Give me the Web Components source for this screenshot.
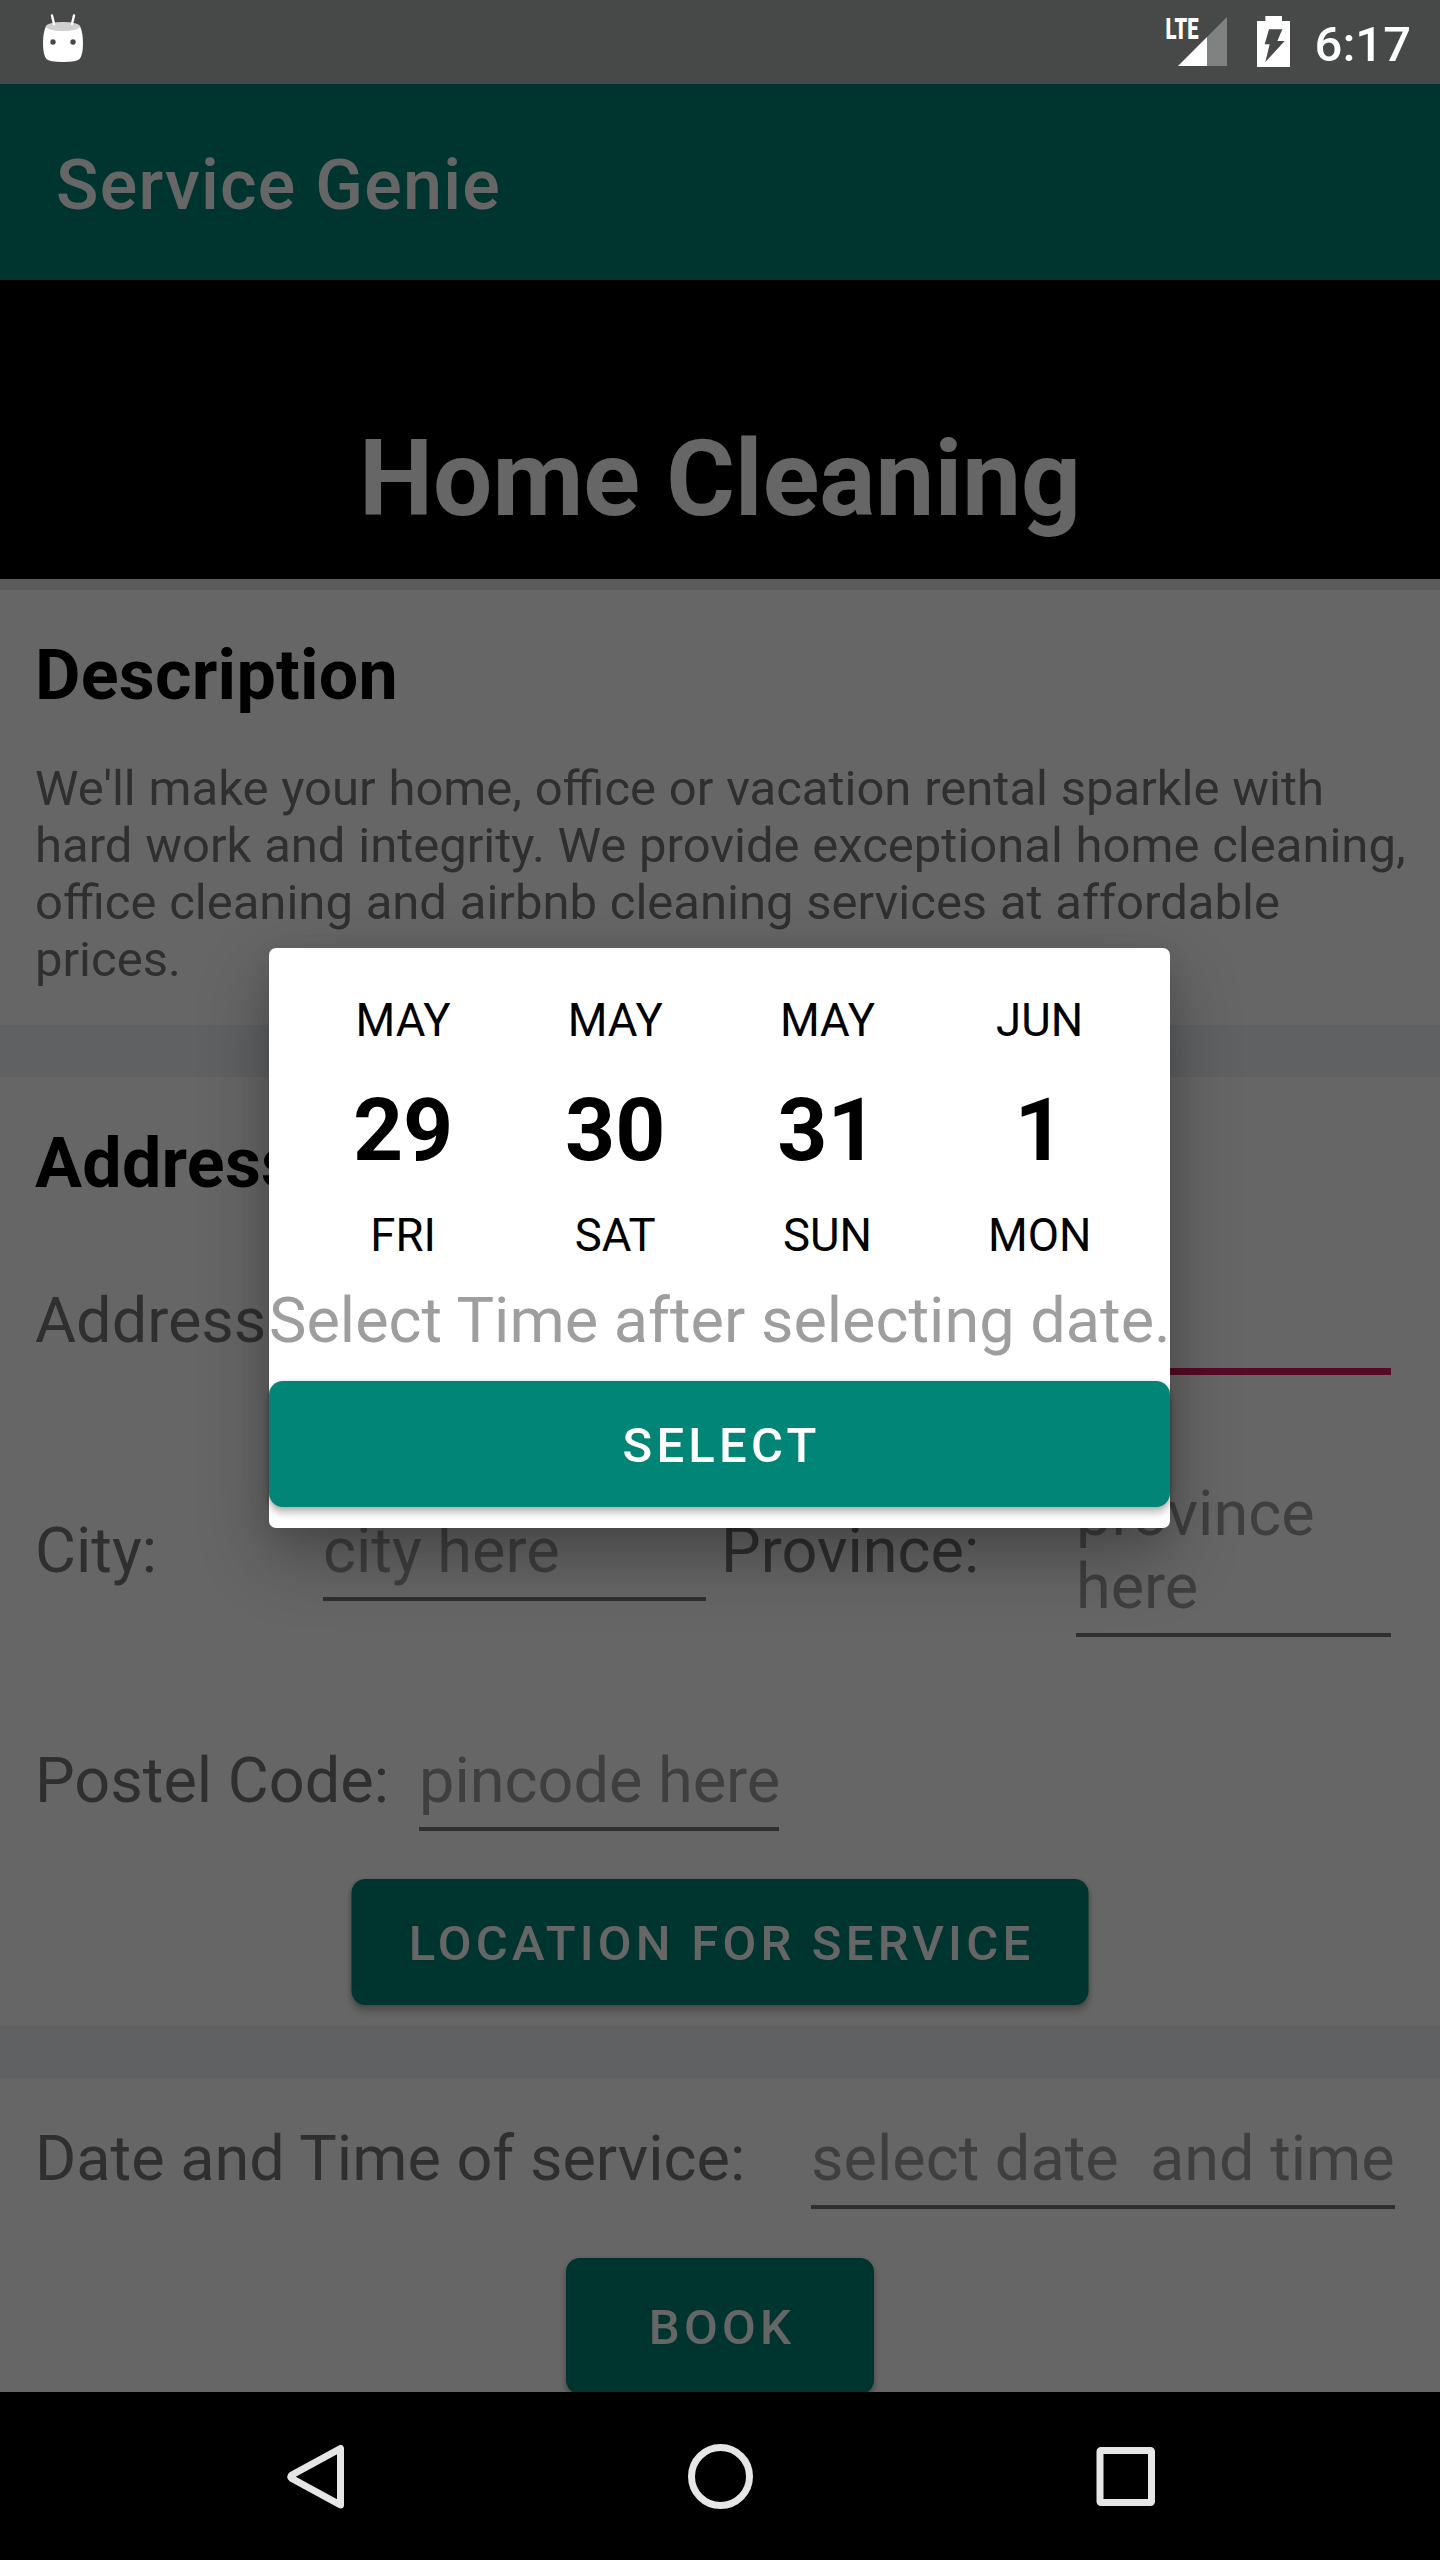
<!DOCTYPE html>
<html lang="en">
<head>
<meta charset="utf-8">
<title>Service Genie</title>
<style>
html,body{margin:0;padding:0;background:#000}
body{width:1440px;height:2560px;overflow:hidden;font-family:Roboto,"Noto Sans",sans-serif}
</style>
</head>
<body>
<service-app></service-app>
<script>
function define(name, html) {
  const t = document.createElement('template');
  t.innerHTML = html.trim();
  customElements.define(name, class extends HTMLElement {
    constructor() {
      super();
      this.attachShadow({mode: 'open'}).appendChild(t.content.cloneNode(true));
    }
  });
}

define('status-bar', `
<style>
:host{display:flex;align-items:flex-start;height:84px;background:#474948;color:#fff;box-sizing:border-box;padding-left:43px;padding-right:29px}
svg{display:block;flex:none;overflow:visible}
.robot{margin-top:14px}
.signal{margin:15px 30px 0 auto}
.battery{margin:16px 25px 0 0}
.time{font-size:49px;line-height:58px;margin-top:16px;font-weight:500;letter-spacing:0}
</style>
<svg class="robot" width="40" height="49" viewBox="0 0 40 49">
<path d="M3 12Q20 5 37 12Q40 19 40 29Q40 41 36.500 45Q34 48 20 48Q6 48 3.500 45Q0 41 0 29Q0 19 3 12Z" fill="#fff"/>
<ellipse cx="20" cy="12.500" rx="17" ry="4.500" fill="#d0d0d0"/>
<path d="M9 1.500L11 10M31 1.500L29 10" stroke="#fff" stroke-width="2.400" stroke-linecap="round"/>
<circle cx="10" cy="28" r="2.700" fill="#474948"/><circle cx="30" cy="28" r="2.700" fill="#474948"/>
</svg>
<svg class="signal" width="61" height="52" viewBox="1166 15 61 52">
<path d="M1207 66V37L1227 17V66Z" fill="#808181"/><path d="M1178 66L1207 37V66Z" fill="#fff"/>
<text x="1165.500" y="39.400" font-family="Roboto" font-weight="900" font-size="30" textLength="33" lengthAdjust="spacingAndGlyphs" fill="#fff">LTE</text>
</svg>
<svg class="battery" width="33" height="51" viewBox="351 48 99 153">
<path fill="#fff" fill-rule="evenodd" d="M376 48H426V63H450V201H351V63H376ZM387 88L374 133H389L376 186L434 123H412L427 88Z"/>
</svg>
<span class="time">6:17</span>`);

define('app-bar', `
<style>
:host{display:flex;align-items:center;height:196px;box-sizing:border-box;padding:6px 0 0 56px;background:#008577;color:#fff;font-size:70px;font-weight:500;letter-spacing:1.25px}
</style><slot></slot>`);

define('page-banner', `
<style>
:host{display:block;height:299px;box-sizing:border-box;padding-top:138px;background:#000;color:#fff;text-align:center;font-size:105px;line-height:124px;font-weight:700}
</style><slot></slot>`);

define('section-gap', `
<style>:host{display:block;height:52px;background:#eef2f8}:host([thin]){height:11px;background:#e4e4e4}</style>`);

define('section-title', `
<style>:host{display:block;font-size:70px;line-height:82px;font-weight:700;color:#000;letter-spacing:.25px}</style><slot></slot>`);

define('field-label', `
<style>:host{display:block;font-size:63px;line-height:74px;padding-bottom:13px;color:#757575;white-space:nowrap}</style><slot></slot>`);

define('text-field', `
<style>
:host{display:block;box-sizing:border-box;font-size:63px;line-height:73px;color:#9e9e9e}
.in{display:block;min-height:73px;padding:0 0 10px;border-bottom:4px solid #757575;white-space:pre-wrap}
:host([single]) .in{white-space:pre}
:host([focused]) .in{padding-bottom:11px;border-bottom:7px solid #d81b60}
</style><span class="in"><slot></slot></span>`);

define('action-button', `
<style>
:host{display:flex;align-items:center;justify-content:center;box-sizing:border-box;height:126px;padding:3px 0 0 4px;border-radius:14px;background:#008577;color:#fff;font-size:49px;font-weight:500;letter-spacing:4.22px;box-shadow:0 7px 7px rgba(0,0,0,.2),0 1px 5px rgba(0,0,0,.2)}
</style><slot></slot>`);

define('date-option', `
<style>
:host{display:flex;flex-direction:column;align-items:center;width:212.2px;color:#000;font-size:45.5px;line-height:54px}
.num{font-size:87.5px;line-height:102px;font-weight:700;margin:31px 0 28px}
</style>
<slot name="month"></slot><span class="num"><slot name="date"></slot></span><slot name="day"></slot>`);

define('date-dialog', `
<style>
:host{display:flex;flex-direction:column;box-sizing:border-box;width:901px;height:580px;background:#fff;border-radius:7px;box-shadow:0 28px 70px rgba(0,0,0,.3),0 6px 24px rgba(0,0,0,.08)}
.dates{display:flex;padding:46px 0 0 28px;height:305px;box-sizing:border-box}
.hint{font-size:63px;line-height:74px;color:#9e9e9e;white-space:nowrap;margin:31px 0 0;height:97px}
</style>
<div class="dates"><slot></slot></div>
<div class="hint">Select Time after selecting date.</div>
<action-button>SELECT</action-button>`);

define('nav-bar', `
<style>
:host{display:flex;align-items:center;justify-content:space-between;height:168px;box-sizing:border-box;padding:0 282px;background:#000}
svg{display:block}
</style>
<svg width="66" height="70" viewBox="282 2441 66 70"><path d="M340.500 2448.500V2505L291.800 2478.500Q289.500 2476.700 291.800 2475Z" fill="none" stroke="#e6e6e6" stroke-width="7" stroke-linejoin="round"/></svg>
<svg width="70" height="70" viewBox="0 0 70 70"><circle cx="35.500" cy="35.500" r="29" fill="none" stroke="#e6e6e6" stroke-width="7"/></svg>
<svg width="66" height="70" viewBox="1092 2441 66 70"><rect x="1100" y="2450.500" width="51.500" height="52" rx="1" fill="none" stroke="#e6e6e6" stroke-width="7" stroke-linejoin="round"/></svg>`);

define('service-app', `
<style>
:host{display:flex;flex-direction:column;width:1440px;height:2560px;position:relative}
.content{height:2308px;overflow:hidden;background:#fff;flex:none}
section{box-sizing:border-box;padding:0 35px}
.desc{height:435px;padding-top:44px}
p{margin:44px 0 0;font-size:49px;line-height:57px;color:#757575;width:1375px;word-spacing:.6px}
.addr{height:949px;padding-top:45px}
.row{display:flex;align-items:center}
.r1{margin-top:80px;padding-right:14px}
.r1 field-label{padding-bottom:17px}
.r2{margin-top:102px;padding-right:14px}
.r3{margin-top:107px}
.when{height:313px;padding-top:44px}
.loc{width:737px;margin:48px auto 0;transform:translateX(-.5px)}
.book{width:308px;height:136px;margin:49px auto 0}
/* dims everything between the status bar and the navigation bar */
.scrim{position:absolute;left:0;top:84px;width:1440px;height:2308px;background:rgba(0,0,0,.6);display:flex;justify-content:center}
date-dialog{margin-top:864px;margin-left:-1px}
</style>
<status-bar></status-bar>
<div class="content">
<app-bar>Service Genie</app-bar>
<page-banner>Home Cleaning</page-banner>
<section-gap thin></section-gap>
<section class="desc"><section-title>Description</section-title>
<p>We'll make your home, office or vacation rental sparkle with hard work and integrity. We provide exceptional home cleaning, office cleaning and airbnb cleaning services at affordable prices.</p></section>
<section-gap></section-gap>
<section class="addr"><section-title>Address</section-title>
<div class="row r1"><field-label style="width:288px">Address:</field-label><text-field focused style="flex:1"></text-field></div>
<div class="row r2"><field-label style="width:288px">City:</field-label><text-field style="width:383px">city here</text-field><field-label style="width:355px;margin-left:15px">Province:</field-label><text-field style="width:315px">province here</text-field></div>
<div class="row r3"><field-label style="width:384px">Postel Code:</field-label><text-field single style="width:360px">pincode here</text-field></div>
<action-button class="loc">LOCATION FOR SERVICE</action-button></section>
<section-gap></section-gap>
<section class="when">
<div class="row"><field-label style="width:776px">Date and Time of service:</field-label><text-field single style="width:584px">select date  and time</text-field></div>
<action-button class="book">BOOK</action-button></section>
</div>
<nav-bar></nav-bar>
<div class="scrim"><date-dialog>
<date-option><span slot="month">MAY</span><span slot="date">29</span><span slot="day">FRI</span></date-option>
<date-option><span slot="month">MAY</span><span slot="date">30</span><span slot="day">SAT</span></date-option>
<date-option><span slot="month">MAY</span><span slot="date">31</span><span slot="day">SUN</span></date-option>
<date-option><span slot="month">JUN</span><span slot="date">1</span><span slot="day">MON</span></date-option>
</date-dialog></div>`);
</script>
</body>
</html>
